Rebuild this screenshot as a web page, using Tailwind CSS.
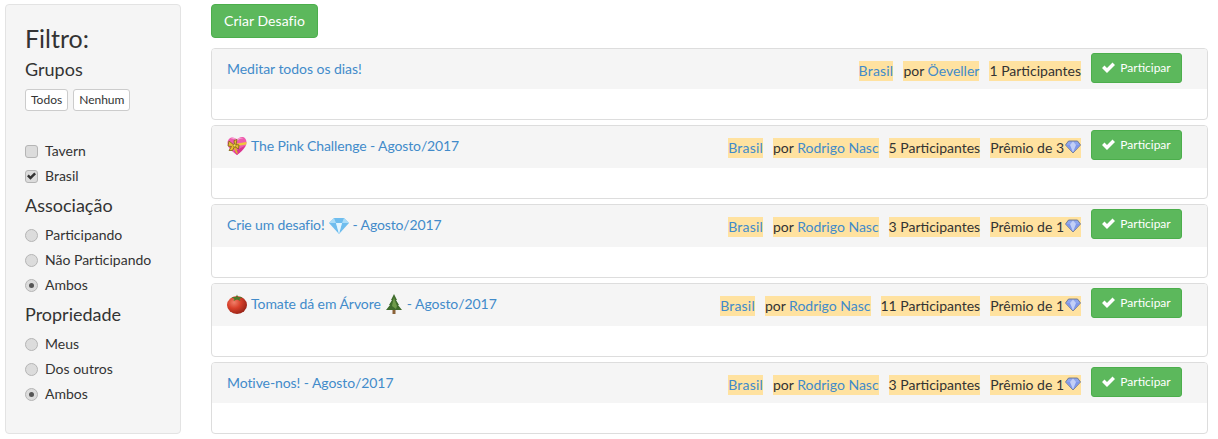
<!DOCTYPE html>
<html>
<head>
  <title>Desafios</title>
  <script src="https://cdn.jsdelivr.net/npm/@tailwindcss/browser@4"></script>
</head>
<body class="bg-white font-['Lato',sans-serif] text-[14px] leading-[20px] text-[#333]">

<div class="flex items-start h-[439px] overflow-hidden pt-1 pl-[5px] pr-[10px]">

  <!-- Filter sidebar -->
  <aside class="w-[176px] h-[430px] shrink-0 bg-[#f5f5f5] border border-[#e3e3e3] rounded pl-[19px] pt-[18px]">
    <h2 class="text-[25px] leading-[30px]">Filtro:</h2>
    <h3 class="text-[18px] leading-[20px] mt-[6px]">Grupos</h3>
    <div class="flex gap-[5px] mt-[10px]">
      <button class="h-[22px] px-[5px] bg-white border border-[#ccc] rounded-[3px] text-[12px] leading-[18px]">Todos</button>
      <button class="h-[22px] px-[5px] bg-white border border-[#ccc] rounded-[3px] text-[12px] leading-[18px]">Nenhum</button>
    </div>

    <div class="mt-[30px] flex flex-col gap-[5px]">
      <label class="flex items-center gap-[7px] h-[20px]">
        <span class="w-[13px] h-[13px] bg-[#dcdcdc] border border-[#b5b5b5] rounded-[3px]"></span>Tavern
      </label>
      <label class="flex items-center gap-[7px] h-[20px]">
        <span class="w-[13px] h-[13px] bg-[#dcdcdc] border border-[#b5b5b5] rounded-[3px] flex items-center justify-center">
          <svg viewBox="0 0 13 11" class="w-[9px] h-[8px]"><path d="M0 6 L2.500 3.500 L5 6 L10.500 0.500 L13 3 L5 11 Z" fill="#333"/></svg>
        </span>Brasil
      </label>
    </div>

    <h3 class="text-[18px] leading-[20px] mt-[9px]">Associação</h3>
    <div class="mt-[10px] flex flex-col gap-[5px]">
      <label class="flex items-center gap-[7px] h-[20px]"><span class="w-[13px] h-[13px] bg-[#dcdcdc] border border-[#b5b5b5] rounded-full"></span>Participando</label>
      <label class="flex items-center gap-[7px] h-[20px]"><span class="w-[13px] h-[13px] bg-[#dcdcdc] border border-[#b5b5b5] rounded-full"></span>Não Participando</label>
      <label class="flex items-center gap-[7px] h-[20px]"><span class="w-[13px] h-[13px] bg-[#dcdcdc] border border-[#b5b5b5] rounded-full flex items-center justify-center"><span class="w-[5px] h-[5px] rounded-full bg-[#555]"></span></span>Ambos</label>
    </div>

    <h3 class="text-[18px] leading-[20px] mt-[9px]">Propriedade</h3>
    <div class="mt-[10px] flex flex-col gap-[5px]">
      <label class="flex items-center gap-[7px] h-[20px]"><span class="w-[13px] h-[13px] bg-[#dcdcdc] border border-[#b5b5b5] rounded-full"></span>Meus</label>
      <label class="flex items-center gap-[7px] h-[20px]"><span class="w-[13px] h-[13px] bg-[#dcdcdc] border border-[#b5b5b5] rounded-full"></span>Dos outros</label>
      <label class="flex items-center gap-[7px] h-[20px]"><span class="w-[13px] h-[13px] bg-[#dcdcdc] border border-[#b5b5b5] rounded-full flex items-center justify-center"><span class="w-[5px] h-[5px] rounded-full bg-[#555]"></span></span>Ambos</label>
    </div>
  </aside>

  <!-- Challenge list -->
  <main class="flex-1 ml-[30px]">
    <button class="block w-[107px] h-[34px] bg-[#5cb85c] border border-[#4cae4c] rounded text-white tracking-[0.05px]">Criar Desafio</button>

    <!-- Meditar -->
    <section class="mt-[10px] h-[72px] border border-[#ddd] rounded overflow-hidden">
      <div class="h-[40px] bg-[#f5f5f5] flex justify-between pl-[15px] pr-[25px]">
        <a class="text-[#428bca] mt-[10px] tracking-[-0.04px]">Meditar todos os dias!</a>
        <div class="flex gap-[10px] pt-[4px]">
          <div class="flex gap-[10px] mt-[8px] h-[20px]">
            <span class="bg-[#ffe2a0] text-[#428bca] tracking-[0.2px]">Brasil</span>
            <span class="bg-[#ffe2a0]">por <a class="text-[#428bca]">Öeveller</a></span>
            <span class="bg-[#ffe2a0]">1 Participantes</span>
          </div>
          <button class="w-[91px] h-[30px] bg-[#5cb85c] border border-[#4cae4c] rounded-[3px] text-white text-[12px] flex items-center justify-center gap-[5px]">
            <svg viewBox="0 0 13 11" class="w-[13px] h-[11px] -mt-[2px]"><path d="M0 6 L2.500 3.500 L5 6 L10.500 0.500 L13 3 L5 11 Z" fill="#fff"/></svg>Participar
          </button>
        </div>
      </div>
    </section>

    <!-- Pink challenge -->
    <section class="mt-[5px] h-[74px] border border-[#ddd] rounded overflow-hidden">
      <div class="h-[42px] bg-[#f5f5f5] flex justify-between pl-[15px] pr-[25px]">
        <a class="text-[#428bca] mt-[10px] flex items-start gap-[4px] tracking-[-0.12px]">
          <svg viewBox="0 0 20 20" class="w-[20px] h-[20px]">
            <path d="M10 19 C5 15.500 0.500 12 0.500 7 C0.500 3.500 3 1.500 5.500 1.500 C7.500 1.500 9 2.500 10 4 C11 2.500 12.500 1 15 1 C17.500 1 19.500 3 19.500 6.500 C19.500 11.500 14 16 10 19 Z" fill="#ee5cae"/>
            <path d="M3 3 C5 2.200 8 3 10 5 C12 2.800 15 2 17 3 C15 1.200 12 1.200 10 3 C8 1.500 5 1.500 3 3 Z" fill="#f9a3d3"/>
            <path d="M10 19 C13 16.500 17 13 18.500 9.500 L7 15.500 Z" fill="#d9358f"/>
            <path d="M7 8 L19.500 6 L19.300 8.500 L8 10.500 Z" fill="#f0c63c"/>
            <path d="M6 10 L9 17 L11 18 L8.500 10 Z" fill="#e0b02c"/>
            <path d="M7.500 9.500 L2 5 L1 10 L4.500 10.500 L2 14.500 L5.500 14.500 L7.500 10.500 L11.500 13 L12 9 L9 8.500 L10 3.500 L7 4.500 Z" fill="#e8bd35" stroke="#7d6212" stroke-width="0.8"/>
            <circle cx="7.500" cy="9.500" r="1.400" fill="#f6da62" stroke="#7d6212" stroke-width="0.6"/>
          </svg>
          The Pink Challenge - Agosto/2017
        </a>
        <div class="flex gap-[10px] pt-[4px]">
          <div class="flex gap-[10px] mt-[8px] h-[20px]">
            <span class="bg-[#ffe2a0] text-[#428bca] tracking-[0.2px]">Brasil</span>
            <span class="bg-[#ffe2a0]">por <a class="text-[#428bca]">Rodrigo Nasc</a></span>
            <span class="bg-[#ffe2a0]">5 Participantes</span>
            <span class="bg-[#ffe2a0] flex">Prêmio de 3
              <svg viewBox="0 0 16 14" class="w-[16px] h-[14px] mt-[2px] ml-[1px]"><path d="M3.500 1 H12.500 L15.500 5 L8 13 L0.500 5 Z" fill="#8fa6ee" stroke="#5f6b80" stroke-width="0.8"/><path d="M1 5 H15 L8 12.500 Z" fill="#7f97ea"/><path d="M5 5 L8 1.500 L11 5 L8 12.500 Z" fill="#c2cff7"/></svg>
            </span>
          </div>
          <button class="w-[91px] h-[30px] bg-[#5cb85c] border border-[#4cae4c] rounded-[3px] text-white text-[12px] flex items-center justify-center gap-[5px]">
            <svg viewBox="0 0 13 11" class="w-[13px] h-[11px] -mt-[2px]"><path d="M0 6 L2.500 3.500 L5 6 L10.500 0.500 L13 3 L5 11 Z" fill="#fff"/></svg>Participar
          </button>
        </div>
      </div>
    </section>

    <!-- Crie um desafio -->
    <section class="mt-[5px] h-[74px] border border-[#ddd] rounded overflow-hidden">
      <div class="h-[42px] bg-[#f5f5f5] flex justify-between pl-[15px] pr-[25px]">
        <a class="text-[#428bca] mt-[10px] flex items-start gap-[4px] tracking-[-0.14px]">Crie um desafio!
          <svg viewBox="0 0 20 18" class="w-[20px] h-[18px] mt-[2px]"><path d="M5 1 H15 L20 6 L10 17 L0 6 Z" fill="#6fbdee"/><path d="M0 6 H20 L15 1 L13 6 L10 17 L7 6 L5 1 Z" fill="#aadcf8"/><path d="M7 6 H13 L10 17 Z" fill="#e2f5ff"/></svg>
          - Agosto/2017
        </a>
        <div class="flex gap-[10px] pt-[4px]">
          <div class="flex gap-[10px] mt-[8px] h-[20px]">
            <span class="bg-[#ffe2a0] text-[#428bca] tracking-[0.2px]">Brasil</span>
            <span class="bg-[#ffe2a0]">por <a class="text-[#428bca]">Rodrigo Nasc</a></span>
            <span class="bg-[#ffe2a0]">3 Participantes</span>
            <span class="bg-[#ffe2a0] flex">Prêmio de 1
              <svg viewBox="0 0 16 14" class="w-[16px] h-[14px] mt-[2px] ml-[1px]"><path d="M3.500 1 H12.500 L15.500 5 L8 13 L0.500 5 Z" fill="#8fa6ee" stroke="#5f6b80" stroke-width="0.8"/><path d="M1 5 H15 L8 12.500 Z" fill="#7f97ea"/><path d="M5 5 L8 1.500 L11 5 L8 12.500 Z" fill="#c2cff7"/></svg>
            </span>
          </div>
          <button class="w-[91px] h-[30px] bg-[#5cb85c] border border-[#4cae4c] rounded-[3px] text-white text-[12px] flex items-center justify-center gap-[5px]">
            <svg viewBox="0 0 13 11" class="w-[13px] h-[11px] -mt-[2px]"><path d="M0 6 L2.500 3.500 L5 6 L10.500 0.500 L13 3 L5 11 Z" fill="#fff"/></svg>Participar
          </button>
        </div>
      </div>
    </section>

    <!-- Tomate -->
    <section class="mt-[5px] h-[74px] border border-[#ddd] rounded overflow-hidden">
      <div class="h-[42px] bg-[#f5f5f5] flex justify-between pl-[15px] pr-[25px]">
        <a class="text-[#428bca] mt-[10px] flex items-start gap-[4px] tracking-[-0.06px]">
          <svg viewBox="0 0 20 20" class="w-[20px] h-[20px]">
            <defs><radialGradient id="tomato" cx="0.35" cy="0.35" r="0.75"><stop offset="0" stop-color="#f0806a"/><stop offset="0.45" stop-color="#d8402a"/><stop offset="1" stop-color="#8e1f14"/></radialGradient></defs>
            <ellipse cx="10" cy="11" rx="10" ry="9" fill="url(#tomato)"/>
            <path d="M10 0.500 L11 3 L15.500 3 L12.500 5 L13.500 7 L10 5.500 L6.500 7 L7.500 5 L4.500 3 L9 3 Z" fill="#4d7a2a"/>
          </svg>
          Tomate dá em Árvore
          <svg viewBox="0 0 18 20" class="w-[18px] h-[20px]"><path d="M9 0 L12 6 L11 6 L14 11 L13 11 L17 16 H1 L5 11 L4 11 L7 6 L6 6 Z" fill="#3f6b2b"/><path d="M7.500 16 H10.500 V20 H7.500 Z" fill="#8a6238"/><path d="M9 3 L10 7 L12 12 L11 15 L7 12 L8 7 Z" fill="#6f9a4a"/></svg>
          - Agosto/2017
        </a>
        <div class="flex gap-[10px] pt-[4px]">
          <div class="flex gap-[10px] mt-[8px] h-[20px]">
            <span class="bg-[#ffe2a0] text-[#428bca] tracking-[0.2px]">Brasil</span>
            <span class="bg-[#ffe2a0]">por <a class="text-[#428bca]">Rodrigo Nasc</a></span>
            <span class="bg-[#ffe2a0]">11 Participantes</span>
            <span class="bg-[#ffe2a0] flex">Prêmio de 1
              <svg viewBox="0 0 16 14" class="w-[16px] h-[14px] mt-[2px] ml-[1px]"><path d="M3.500 1 H12.500 L15.500 5 L8 13 L0.500 5 Z" fill="#8fa6ee" stroke="#5f6b80" stroke-width="0.8"/><path d="M1 5 H15 L8 12.500 Z" fill="#7f97ea"/><path d="M5 5 L8 1.500 L11 5 L8 12.500 Z" fill="#c2cff7"/></svg>
            </span>
          </div>
          <button class="w-[91px] h-[30px] bg-[#5cb85c] border border-[#4cae4c] rounded-[3px] text-white text-[12px] flex items-center justify-center gap-[5px]">
            <svg viewBox="0 0 13 11" class="w-[13px] h-[11px] -mt-[2px]"><path d="M0 6 L2.500 3.500 L5 6 L10.500 0.500 L13 3 L5 11 Z" fill="#fff"/></svg>Participar
          </button>
        </div>
      </div>
    </section>

    <!-- Motive-nos -->
    <section class="mt-[5px] h-[72px] border border-[#ddd] rounded overflow-hidden">
      <div class="h-[40px] bg-[#f5f5f5] flex justify-between pl-[15px] pr-[25px]">
        <a class="text-[#428bca] mt-[10px] tracking-[-0.08px]">Motive-nos! - Agosto/2017</a>
        <div class="flex gap-[10px] pt-[4px]">
          <div class="flex gap-[10px] mt-[8px] h-[20px]">
            <span class="bg-[#ffe2a0] text-[#428bca] tracking-[0.2px]">Brasil</span>
            <span class="bg-[#ffe2a0]">por <a class="text-[#428bca]">Rodrigo Nasc</a></span>
            <span class="bg-[#ffe2a0]">3 Participantes</span>
            <span class="bg-[#ffe2a0] flex">Prêmio de 1
              <svg viewBox="0 0 16 14" class="w-[16px] h-[14px] mt-[2px] ml-[1px]"><path d="M3.500 1 H12.500 L15.500 5 L8 13 L0.500 5 Z" fill="#8fa6ee" stroke="#5f6b80" stroke-width="0.8"/><path d="M1 5 H15 L8 12.500 Z" fill="#7f97ea"/><path d="M5 5 L8 1.500 L11 5 L8 12.500 Z" fill="#c2cff7"/></svg>
            </span>
          </div>
          <button class="w-[91px] h-[30px] bg-[#5cb85c] border border-[#4cae4c] rounded-[3px] text-white text-[12px] flex items-center justify-center gap-[5px]">
            <svg viewBox="0 0 13 11" class="w-[13px] h-[11px] -mt-[2px]"><path d="M0 6 L2.500 3.500 L5 6 L10.500 0.500 L13 3 L5 11 Z" fill="#fff"/></svg>Participar
          </button>
        </div>
      </div>
    </section>
  </main>
</div>

</body>
</html>
